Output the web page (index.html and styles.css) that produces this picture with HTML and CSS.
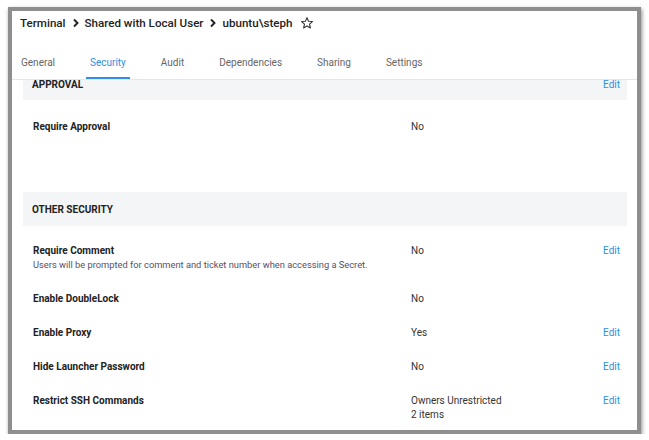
FILE: index.html
```html
<!DOCTYPE html>
<html>
<head>
<meta charset="utf-8">
<link rel="stylesheet" href="styles.css">
</head>
<body>
<div class="frame">
  <div class="page">
    <header class="crumbs">
      <span class="crumb">Terminal</span>
      <svg class="chev" viewBox="0 0 8 10" width="8" height="10"><path d="M2 1.5 L5.5 5 L2 8.5" fill="none" stroke="#222" stroke-width="1.9"/></svg>
      <span class="crumb">Shared with Local User</span>
      <svg class="chev" viewBox="0 0 8 10" width="8" height="10"><path d="M2 1.5 L5.5 5 L2 8.5" fill="none" stroke="#222" stroke-width="1.9"/></svg>
      <span class="crumb">ubuntu\steph</span>
      <svg class="star" viewBox="0 0 24 24" width="14" height="14"><path d="M12 2.8 L14.7 8.9 L21.3 9.5 L16.3 13.9 L17.8 20.4 L12 17 L6.2 20.4 L7.7 13.9 L2.7 9.5 L9.3 8.9 Z" fill="none" stroke="#333" stroke-width="1.9" stroke-linejoin="round"/></svg>
    </header>
    <nav class="tabs">
      <a class="tab">General</a>
      <a class="tab active">Security</a>
      <a class="tab">Audit</a>
      <a class="tab">Dependencies</a>
      <a class="tab">Sharing</a>
      <a class="tab">Settings</a>
    </nav>
    <div class="content">
      <section class="section first">
        <div class="band scrolled"><h3>APPROVAL</h3><a class="edit">Edit</a></div>
        <div class="rows">
          <div class="row">
            <div class="label"><b>Require Approval</b></div>
            <div class="value">No</div>
            <div class="action"></div>
          </div>
        </div>
      </section>
      <section class="section">
        <div class="band"><h3>OTHER SECURITY</h3></div>
        <div class="rows">
          <div class="row">
            <div class="label"><b>Require Comment</b><span class="desc">Users will be prompted for comment and ticket number when accessing a Secret.</span></div>
            <div class="value">No</div>
            <div class="action"><a class="edit">Edit</a></div>
          </div>
          <div class="row">
            <div class="label"><b>Enable DoubleLock</b></div>
            <div class="value">No</div>
            <div class="action"></div>
          </div>
          <div class="row">
            <div class="label"><b>Enable Proxy</b></div>
            <div class="value">Yes</div>
            <div class="action"><a class="edit">Edit</a></div>
          </div>
          <div class="row">
            <div class="label"><b>Hide Launcher Password</b></div>
            <div class="value">No</div>
            <div class="action"><a class="edit">Edit</a></div>
          </div>
          <div class="row">
            <div class="label"><b>Restrict SSH Commands</b></div>
            <div class="value">Owners Unrestricted<br>2 items</div>
            <div class="action"><a class="edit">Edit</a></div>
          </div>
        </div>
      </section>
    </div>
  </div>
</div>
</body>
</html>
```

FILE: styles.css
```css
html, body {
  margin: 0;
  padding: 0;
  background: #ffffff;
}
body {
  font-family: Roboto, "Liberation Sans", sans-serif;
  color: #222;
}
.frame {
  margin: 7px 8px 0 8px;
  height: 419px;
  border: 4px solid #8e8e8e;
  box-shadow: 1px 2px 4px rgba(0,0,0,0.45);
  background: #fff;
  overflow: hidden;
}
.page {
  height: 100%;
  display: flex;
  flex-direction: column;
}
.crumbs {
  display: flex;
  align-items: center;
  padding: 2px 0 0 8px;
  height: 20px;
  font-size: 11.6px;
  font-weight: 500;
  color: #222;
}
.chev {
  margin: 0 5px 0 6px;
}
.star {
  margin-left: 8px;
}
.tabs {
  display: flex;
  gap: 27px;
  margin-top: 15px;
  padding-left: 5px;
  border-bottom: 1px solid #e4e6ea;
}
.tab {
  font-size: 10px;
  line-height: 14px;
  color: #666;
  padding: 8px 4px 7px 4px;
  border-bottom: 2px solid transparent;
}
.tab.active {
  color: #2d8fe6;
  border-bottom-color: #2d8fe6;
}
.content {
  flex: 1;
  overflow: hidden;
  padding: 0 10px 0 11px;
  display: flex;
  flex-direction: column;
  gap: 48px;
}
.section.first .rows {
  padding-top: 10px;
}
.band {
  display: flex;
  align-items: center;
  justify-content: space-between;
  background: #f4f5f7;
  height: 34px;
  padding: 0 7px 0 9px;
}
.band.scrolled {
  height: 20px;
  align-items: flex-start;
}
.band.scrolled h3,
.band.scrolled .edit {
  line-height: 10px;
}
.band h3 {
  margin: 0;
  font-size: 10px;
  font-weight: 700;
  color: #222;
}
.edit {
  font-size: 10px;
  color: #2d8fe6;
}
.rows {
  padding-top: 8px;
}
.row {
  display: flex;
  padding: 10px 7px 10px 10px;
  font-size: 10px;
  line-height: 14px;
}
.label {
  width: 378px;
  display: flex;
  flex-direction: column;
}
.label b {
  font-weight: 700;
  color: #222;
}
.desc {
  font-size: 9.3px;
  color: #57506a;
}
.value {
  flex: 1;
  color: #333;
}
.action {
  width: 18px;
  text-align: right;
}
```
